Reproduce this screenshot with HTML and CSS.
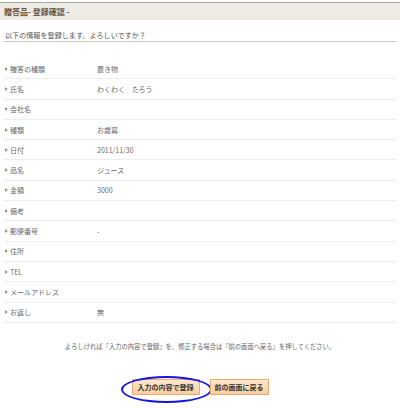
FILE: index.html
```html
<!DOCTYPE html>
<html lang="ja">
<head>
<meta charset="utf-8">
<link rel="stylesheet" href="styles.css">
</head>
<body>
<div class="page">
  <div class="title">贈答品-&nbsp;登録確認 -</div>
  <div class="lead">以下の情報を登録します。よろしいですか？</div>
  <div class="table">
    <div class="row"><div class="label">贈答の種類</div><div class="value">置き物</div></div>
    <div class="row"><div class="label">氏名</div><div class="value">わくわく　たろう</div></div>
    <div class="row"><div class="label">会社名</div><div class="value"></div></div>
    <div class="row"><div class="label">種類</div><div class="value">お歳暮</div></div>
    <div class="row"><div class="label">日付</div><div class="value">2011/11/30</div></div>
    <div class="row"><div class="label">品名</div><div class="value">ジュース</div></div>
    <div class="row"><div class="label">金額</div><div class="value">3000</div></div>
    <div class="row"><div class="label">備考</div><div class="value"></div></div>
    <div class="row"><div class="label">郵便番号</div><div class="value">-</div></div>
    <div class="row"><div class="label">住所</div><div class="value"></div></div>
    <div class="row"><div class="label">TEL</div><div class="value"></div></div>
    <div class="row"><div class="label">メールアドレス</div><div class="value"></div></div>
    <div class="row"><div class="label">お返し</div><div class="value">無</div></div>
  </div>
  <p class="note">よろしければ『入力の内容で登録』を、修正する場合は『前の画面へ戻る』を押してください。</p>
  <div class="actions">
    <button class="btn btn-primary">入力の内容で登録<span class="ring"></span></button>
    <button class="btn">前の画面に戻る</button>
  </div>
</div>
</body>
</html>
```
FILE: styles.css
```css
html, body {
  margin: 0;
  padding: 0;
  background: #ffffff;
}
body {
  width: 400px;
  height: 408px;
  overflow: hidden;
  font-family: "Noto Sans CJK JP", "Noto Sans", sans-serif;
  font-size: 7px;
  color: #6a6a6a;
}
.page {
  padding-top: 2px;
}
.title {
  border-top: 1px solid #a9a6a2;
  background: #eeebe5;
  height: 17px;
  padding-left: 4px;
  display: flex;
  align-items: center;
  font-weight: bold;
  font-size: 8px;
  color: #65523f;
}
.lead {
  margin: 0 4px;
  padding: 9px 1px 0;
  height: 12px;
  line-height: 12px;
  border-bottom: 1px solid #cbc7c0;
  font-size: 7.1px;
  color: #555;
}
.table {
  margin: 17px 4px 0;
}
.row {
  display: grid;
  grid-template-columns: 93px 1fr;
  height: 19.3px;
  border-bottom: 1px solid #eeeeee;
  align-items: center;
}
.label {
  position: relative;
  padding-left: 6px;
}
.label::before {
  content: "";
  position: absolute;
  left: 1px;
  top: 50%;
  margin-top: -2px;
  border-left: 3px solid #9a9a9a;
  border-top: 2px solid transparent;
  border-bottom: 2px solid transparent;
}
.note {
  margin: 19px 0 0;
  text-align: center;
  line-height: 10px;
  font-size: 6.3px;
  color: #666;
}
.actions {
  display: flex;
  justify-content: center;
  gap: 10px;
  margin-top: 27px;
}
.btn {
  position: relative;
  height: 16px;
  padding: 0 4px;
  border: 1px solid #e8ab72;
  background: linear-gradient(#fde6cc, #f9cd9f);
  font-family: inherit;
  font-size: 7px;
  font-weight: bold;
  color: #333;
  line-height: 14px;
  white-space: nowrap;
  cursor: pointer;
}
.btn-primary {
  padding: 0 5px;
}
.ring {
  position: absolute;
  box-sizing: border-box;
  left: -12px;
  top: -4px;
  width: 91px;
  height: 27px;
  border: 2.5px solid #1414dc;
  border-radius: 50%;
  pointer-events: none;
}
```
